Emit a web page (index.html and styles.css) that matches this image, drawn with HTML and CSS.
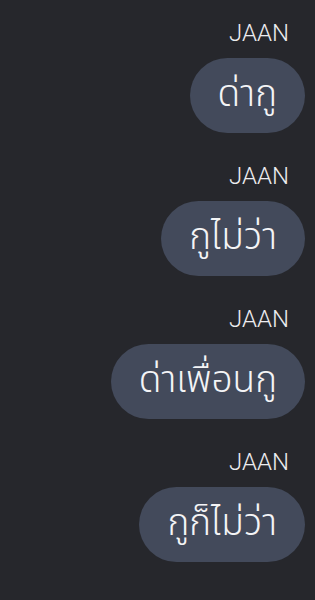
FILE: index.html
```html
<!DOCTYPE html>
<html lang="th">
<head>
<meta charset="UTF-8" />
<meta name="viewport" content="width=device-width, initial-scale=1" />
<title>Chat</title>
<link rel="stylesheet" href="styles.css">
</head>
<body>
  <div class="chat">
    <div class="msg">
      <div class="sender">JAAN</div>
      <div class="bubble">ด่ากู</div>
    </div>
    <div class="msg">
      <div class="sender">JAAN</div>
      <div class="bubble">กูไม่ว่า</div>
    </div>
    <div class="msg">
      <div class="sender">JAAN</div>
      <div class="bubble">ด่าเพื่อนกู</div>
    </div>
    <div class="msg">
      <div class="sender">JAAN</div>
      <div class="bubble">กูก็ไม่ว่า</div>
    </div>
  </div>
</body>
</html>
```

FILE: styles.css
```css
* {margin: 0; padding: 0; box-sizing: border-box;}
body {
  background: #26272c;
  font-family: Roboto, "Noto Sans Thai", sans-serif;
  color: #f2f2f4;
  height: 100vh;
  overflow: hidden;
}
.chat {
  display: flex;
  flex-direction: column;
  align-items: flex-end;
  padding: 18px 10px 0 0;
  gap: 28px;
}
.msg {
  display: flex;
  flex-direction: column;
  align-items: flex-end;
  gap: 10px;
}
.sender {
  font-size: 24px;
  line-height: 30px;
  font-weight: 300;
  padding-right: 16px;
  color: #ececef;
}
.bubble {
  background: #434a5b;
  border-radius: 38px;
  height: 75px;
  padding: 0 28px;
  font-family: "Noto Sans Thai", sans-serif;
  font-size: 37px;
  font-weight: 300;
  line-height: 75px;
  color: #f4f4f6;
}
```
